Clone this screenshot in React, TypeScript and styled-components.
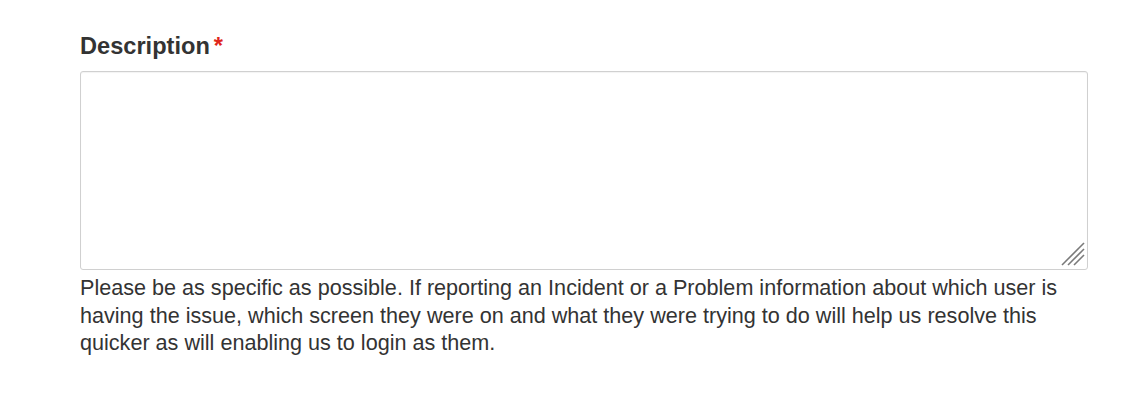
import React from "react";
import styled, { createGlobalStyle } from "styled-components";

const Global = createGlobalStyle`
  html, body { margin: 0; padding: 0; background: #fff; }
  body { font-family: "Liberation Sans", Arial, sans-serif; color: #333; }
`;

const Page = styled.div`
  padding: 31px 48px 0 80px;
`;

const Field = styled.div`
  display: flex;
  flex-direction: column;
  width: 1008px;
`;

const Label = styled.label`
  font-family: "Liberation Sans", Arial, sans-serif;
  font-size: 23.6px;
  font-weight: bold;
  line-height: 30px;
  color: #333;
  margin-bottom: 10px;
  display: flex;
  gap: 4px;
`;

const Required = styled.span`
  color: #e0261b;
`;

const AreaWrap = styled.div`
  position: relative;
  height: 199px;
`;

const TextArea = styled.textarea`
  box-sizing: border-box;
  width: 100%;
  height: 100%;
  border: 1px solid #d0d0d0;
  border-radius: 3px;
  box-shadow: inset 0 1px 1px rgba(0, 0, 0, 0.05);
  resize: none;
  margin: 0;
  font-family: "Liberation Sans", Arial, sans-serif;
  font-size: 21px;
  padding: 8px 10px;
  display: block;
  outline: none;
`;

const Grip = styled.svg`
  position: absolute;
  right: 3px;
  bottom: 4px;
  width: 24px;
  height: 24px;
  pointer-events: none;
`;

const Help = styled.p`
  margin: 4px 0 0;
  font-family: "Liberation Sans", Arial, sans-serif;
  font-size: 21.6px;
  line-height: 27.6px;
  color: #333;
`;

export default function App() {
  return (
    <>
      <Global />
      <Page>
        <Field>
          <Label htmlFor="desc">
            Description<Required>*</Required>
          </Label>
          <AreaWrap>
            <TextArea id="desc" />
            <Grip viewBox="0 0 24 24">
              <g stroke="#7a7a7a" strokeWidth="1.6" strokeLinecap="butt">
                <line x1="1" y1="23" x2="23" y2="1" />
                <line x1="7" y1="23" x2="23" y2="7" />
                <line x1="13" y1="23" x2="23" y2="13" />
              </g>
            </Grip>
          </AreaWrap>
          <Help>
            Please be as specific as possible. If reporting an Incident or a Problem information about which user is
            having the issue, which screen they were on and what they were trying to do will help us resolve this
            quicker as will enabling us to login as them.
          </Help>
        </Field>
      </Page>
    </>
  );
}
